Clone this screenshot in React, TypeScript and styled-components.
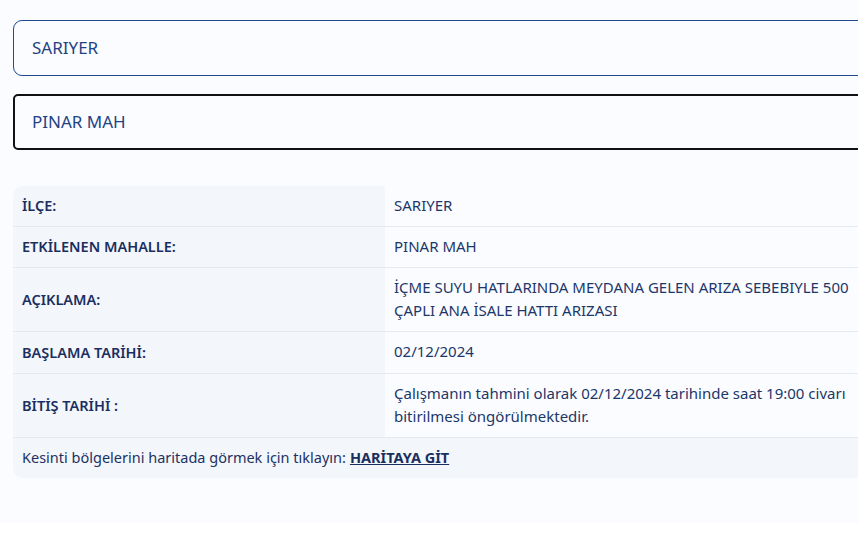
import React from 'react'
import styled, { createGlobalStyle } from 'styled-components'

const GlobalStyle = createGlobalStyle`
  html, body {
    margin: 0;
    padding: 0;
    background: #ffffff;
    overflow: hidden;
  }
  body {
    font-family: 'Noto Sans', 'Open Sans', sans-serif;
  }
`

const Page = styled.div`
  width: 900px;
  height: 523px;
  box-sizing: border-box;
  padding: 20px 0 0 13px;
  background: #fafcff;
  display: flex;
  flex-direction: column;
`

const Field = styled.div<{ $focused?: boolean }>`
  height: 56px;
  box-sizing: border-box;
  display: flex;
  align-items: center;
  padding-bottom: 2px;
  border: ${({ $focused }) => ($focused ? '2px solid #111111' : '1px solid #1f4a8e')};
  border-radius: ${({ $focused }) => ($focused ? '5px' : '9px')};
  padding-left: ${({ $focused }) => ($focused ? '17px' : '18px')};
  font-size: 17px;
  color: #1d4384;
  background: #fbfcff;
  margin-bottom: 18px;
`

const Table = styled.div`
  margin-top: 18px;
  display: grid;
  grid-template-columns: 372px 1fr;
  border-radius: 10px 0 0 10px;
  overflow: hidden;
  color: #1b3263;
  font-size: 15px;
`

const Label = styled.div<{ $h: number }>`
  background: #f3f6fb;
  height: ${({ $h }) => $h}px;
  display: flex;
  align-items: center;
  padding: 0 9px 2px;
  font-size: 14.5px;
  font-weight: 600;
  color: #1a2f5f;
  border-bottom: 1px solid #e6e9ee;
  box-sizing: border-box;
`

const Value = styled.div<{ $h: number }>`
  background: #fafcff;
  height: ${({ $h }) => $h}px;
  display: flex;
  flex-direction: column;
  justify-content: center;
  padding: 0 9px 2px;
  line-height: 23px;
  white-space: nowrap;
  color: #1c3769;
  border-bottom: 1px solid #e6e9ee;
  box-sizing: border-box;
`

const Footer = styled.div`
  grid-column: 1 / span 2;
  background: #f3f6fb;
  height: 40px;
  box-sizing: border-box;
  display: flex;
  align-items: center;
  padding: 0 9px 2px;
  font-size: 14.5px;
`

const MapLink = styled.a`
  margin-left: 4px;
  font-weight: 700;
  color: #1a2f5f;
  text-decoration: underline;
`

const rows = [
  { label: 'İLÇE:', lines: ['SARIYER'], h: 41 },
  { label: 'ETKİLENEN MAHALLE:', lines: ['PINAR MAH'], h: 41 },
  {
    label: 'AÇIKLAMA:',
    lines: ['İÇME SUYU HATLARINDA MEYDANA GELEN ARIZA SEBEBIYLE 500', 'ÇAPLI ANA İSALE HATTI ARIZASI'],
    h: 64,
  },
  { label: 'BAŞLAMA TARİHİ:', lines: ['02/12/2024'], h: 42 },
  {
    label: 'BİTİŞ TARİHİ :',
    lines: ['Çalışmanın tahmini olarak 02/12/2024 tarihinde saat 19:00 civarı', 'bitirilmesi öngörülmektedir.'],
    h: 64,
  },
]

export default function App() {
  return (
    <>
      <GlobalStyle />
      <Page>
        <Field>SARIYER</Field>
        <Field $focused>PINAR MAH</Field>
        <Table>
          {rows.map((r) => (
            <React.Fragment key={r.label}>
              <Label $h={r.h}>{r.label}</Label>
              <Value $h={r.h}>
                {r.lines.map((l) => (
                  <span key={l}>{l}</span>
                ))}
              </Value>
            </React.Fragment>
          ))}
          <Footer>
            Kesinti bölgelerini haritada görmek için tıklayın:
            <MapLink href="#">HARİTAYA GİT</MapLink>
          </Footer>
        </Table>
      </Page>
    </>
  )
}
